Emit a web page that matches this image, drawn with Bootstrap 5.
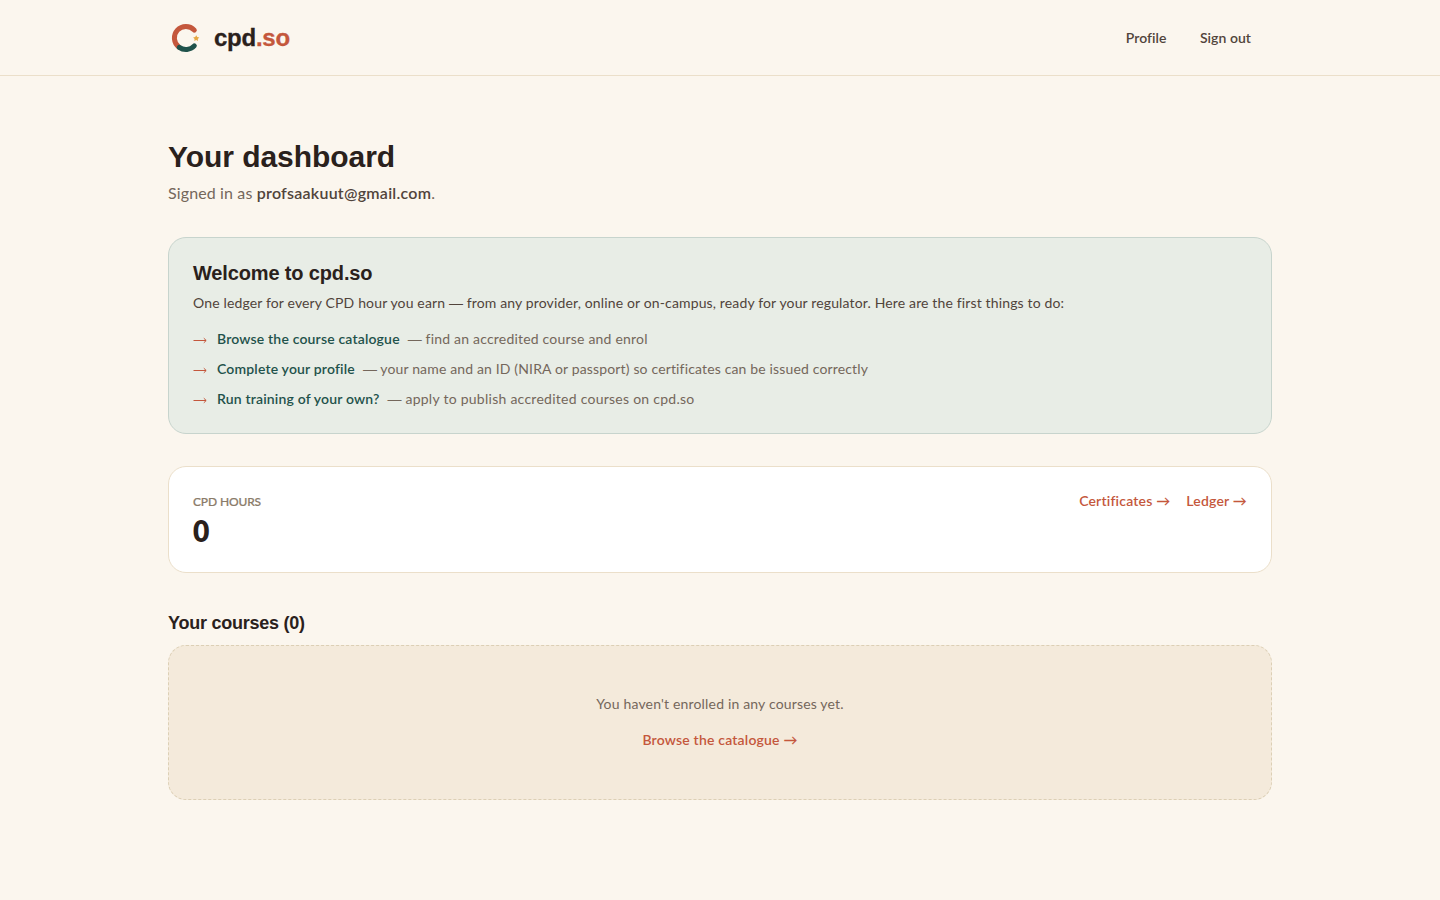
<!DOCTYPE html>
<html lang="en">
<head>
<meta charset="utf-8">
<meta name="viewport" content="width=device-width, initial-scale=1">
<title>Your dashboard · cpd.so</title>
<link rel="stylesheet" href="https://cdn.jsdelivr.net/npm/bootstrap@5.3.0/dist/css/bootstrap.min.css">
<style>
  :root { --ink:#2a211c; --ink-2:#51443b; --muted:#74675b; --clay:#c4573c; --pine:#1f524b; --line:#ebdfca; }
  body { background:#fbf6ee; color:var(--ink); font-family:Lato,"Liberation Sans",sans-serif; font-size:14px; line-height:20px; letter-spacing:.17px; }
  .page-wrap { width:1104px; }
  .site-header { height:76px; border-bottom:1px solid var(--line); }
  h1, h2, .brand-name { font-family:"Liberation Sans",Arial,sans-serif; font-weight:700; margin:0; color:var(--ink); }
  a { text-decoration:none; }
  .brand-name { font-size:24px; line-height:32px; letter-spacing:-.25px; -webkit-text-stroke:.3px; }
  .brand-gap { gap:10px; }
  .clay { color:var(--clay); }
  .top-links { gap:33.5px; padding-right:21px; letter-spacing:.04px; }
  .top-links a { color:var(--ink-2); font-weight:600; }
  main { padding-top:63px; }
  h1 { font-size:30px; line-height:36px; letter-spacing:-.05px; }
  .signed { font-size:16px; line-height:24px; margin-top:6px; color:var(--muted); letter-spacing:.13px; }
  .signed strong { color:var(--ink-2); font-weight:600; letter-spacing:.25px; }
  .panel { border:1px solid var(--line); border-radius:18px; padding:24px; }
  .welcome { background:#e8ede6; border-color:#c7d4cd; margin-top:32px; height:197px; padding-top:23px; }
  .welcome h2 { font-size:20px; line-height:24px; letter-spacing:-.15px; }
  .intro { color:var(--ink-2); margin-top:8px; letter-spacing:.144px; }
  .steps { margin-top:16px; gap:10px; color:var(--muted); }
  .steps a { color:var(--pine); font-weight:600; }
  .arrow-col { width:16px; flex:none; }
  .arrow-col svg { display:block; margin-top:8px; }
  .dash { font-family:"Liberation Sans",sans-serif; letter-spacing:0; }
  .hint { letter-spacing:.2px; }
  .hint-long { letter-spacing:.15px; }
  .hint-apply { letter-spacing:.26px; }
  .hours { margin-top:32px; height:107px; }
  .eyebrow { font-size:12px; line-height:16px; font-weight:500; color:#8a7b69; letter-spacing:-.13px; margin-top:3px; -webkit-text-stroke:.2px; }
  .total { font-size:30px; line-height:36px; font-weight:800; margin-top:2px; transform:scaleX(.94); transform-origin:left; }
  .go { color:var(--clay); font-weight:600; letter-spacing:.19px; }
  .courses-title { font-size:18px; line-height:28px; letter-spacing:-.24px; margin-top:36px; }
  .empty { background:#f4eadb; border:1px dashed #dccfb5; height:155px; margin-top:8px; color:var(--muted); gap:16px; padding-bottom:26px; }
</style>
</head>
<body>
<header class="site-header d-flex">
  <div class="page-wrap mx-auto d-flex align-items-center justify-content-between">
    <a href="#" class="d-flex align-items-center brand-gap">
      <svg width="36" height="36" viewBox="0 0 36 36" fill="none" stroke-width="5" aria-hidden="true">
        <path d="M26.3 10.1A11.5 11.5 0 1 0 10.8 27" stroke="#c4573c" stroke-linecap="round"/>
        <path d="M11.3 27.4A11.5 11.5 0 0 0 26.3 25.9" stroke="#1f524b" stroke-linecap="round"/>
        <path d="m28.2 15.2 1 1.9 2.1.3-1.5 1.5.3 2.1-1.9-1-1.9 1 .3-2.1-1.5-1.5 2.1-.3z" fill="#e5a944"/>
      </svg>
      <span class="brand-name">cpd<span class="clay">.so</span></span>
    </a>
    <nav class="d-flex top-links"><a href="#">Profile</a><a href="#">Sign out</a></nav>
  </div>
</header>
<main class="page-wrap mx-auto">
  <h1>Your dashboard</h1>
  <p class="signed mb-0">Signed in as <strong>profsaakuut@gmail.com</strong>.</p>

  <section class="panel welcome">
    <h2>Welcome to cpd.so</h2>
    <p class="intro mb-0">One ledger for every CPD hour you earn <span class="dash">—</span> from any provider, online or on-campus, ready for your regulator. Here are the first things to do:</p>
    <ul class="steps list-unstyled d-flex flex-column mb-0">
      <li class="d-flex"><span class="clay arrow-col me-2"><svg width="14" height="7" viewBox="0 0 14 7" fill="none" stroke="currentColor"><path d="M.5 3.5H13M10.8 1.2 13.2 3.5 10.8 5.8"/></svg></span><a href="#">Browse the course catalogue</a><span class="hint ms-2"><span class="dash">—</span> find an accredited course and enrol</span></li>
      <li class="d-flex"><span class="clay arrow-col me-2"><svg width="14" height="7" viewBox="0 0 14 7" fill="none" stroke="currentColor"><path d="M.5 3.5H13M10.8 1.2 13.2 3.5 10.8 5.8"/></svg></span><a href="#">Complete your profile</a><span class="hint-long ms-2"><span class="dash">—</span> your name and an ID (NIRA or passport) so certificates can be issued correctly</span></li>
      <li class="d-flex"><span class="clay arrow-col me-2"><svg width="14" height="7" viewBox="0 0 14 7" fill="none" stroke="currentColor"><path d="M.5 3.5H13M10.8 1.2 13.2 3.5 10.8 5.8"/></svg></span><a href="#">Run training of your own?</a><span class="hint-apply ms-2"><span class="dash">—</span> apply to publish accredited courses on cpd.so</span></li>
    </ul>
  </section>

  <section class="panel hours bg-white d-flex justify-content-between align-items-start">
    <div><div class="eyebrow">CPD HOURS</div><div class="total">0</div></div>
    <div class="d-flex gap-3"><a href="#" class="go">Certificates →</a><a href="#" class="go">Ledger →</a></div>
  </section>

  <h2 class="courses-title">Your courses (0)</h2>
  <section class="panel empty d-flex flex-column align-items-center justify-content-center">
    <p class="mb-0">You haven't enrolled in any courses yet.</p>
    <a href="#" class="go">Browse the catalogue →</a>
  </section>
</main>
<script src="https://cdn.jsdelivr.net/npm/bootstrap@5.3.0/dist/js/bootstrap.bundle.min.js"></script>
</body>
</html>
